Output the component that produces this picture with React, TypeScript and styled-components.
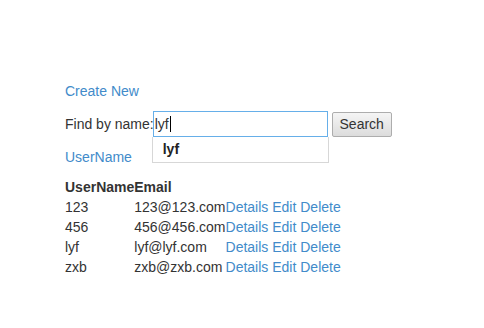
import React from "react";
import styled, { createGlobalStyle } from "styled-components";

const Global = createGlobalStyle`
  html, body { margin: 0; padding: 0; background: #fff; }
  body {
    font-family: "Liberation Sans", Arial, Helvetica, sans-serif;
    font-size: 14px;
    line-height: 20px;
    color: #333;
  }
`;

const Page = styled.div`
  padding: 81px 0 0 65px;
`;

const Link = styled.a`
  color: #428bca;
  text-decoration: none;
  cursor: pointer;
`;

const Para = styled.p<{ $gap: number }>`
  margin: 0 0 ${(p) => p.$gap}px 0;
  height: 20px;
`;

const FormRow = styled.form`
  display: flex;
  align-items: center;
  height: 26px;
  margin: 0 0 10px 0;
`;

const Label = styled.label`
  white-space: nowrap;
`;

const FieldWrap = styled.div`
  position: relative;
  margin-left: -1px;
`;

const Field = styled.div`
  box-sizing: border-box;
  width: 175px;
  height: 26px;
  border: 1px solid #66afe9;
  padding: 0 1px;
  display: flex;
  align-items: center;
  color: #333;
  background: #fff;
`;

const Caret = styled.span`
  display: inline-block;
  width: 1px;
  height: 16px;
  background: #000;
  margin-left: 1px;
`;

const Menu = styled.ul`
  position: absolute;
  top: 100%;
  left: -1px;
  box-sizing: border-box;
  width: 177px;
  height: 26px;
  margin: 0;
  padding: 0;
  list-style: none;
  border: 1px solid #d7d7d7;
  border-top: none;
  background: #fff;
`;

const MenuItem = styled.li`
  padding: 2px 0 0 10px;
  font-weight: bold;
  color: #222;
`;

const Button = styled.button`
  box-sizing: border-box;
  margin-left: 4px;
  width: 60px;
  height: 25px;
  padding: 0;
  font-family: inherit;
  font-size: 14px;
  color: #333;
  border: 1px solid #adadad;
  border-radius: 2px;
  background: linear-gradient(#f5f5f5, #dcdcdc);
`;

const Table = styled.table`
  border-collapse: collapse;
  border-spacing: 0;
  margin-top: 10px;
`;

const Th = styled.th`
  padding: 0;
  text-align: left;
  font-weight: bold;
  height: 20px;
  color: #333;
`;

const Td = styled.td`
  padding: 0;
  height: 20px;
  white-space: nowrap;
`;

const users = [
  { name: "123", email: "123@123.com" },
  { name: "456", email: "456@456.com" },
  { name: "lyf", email: "lyf@lyf.com" },
  { name: "zxb", email: "zxb@zxb.com" },
];

export default function App() {
  return (
    <>
      <Global />
      <Page>
        <Para $gap={10}>
          <Link>Create New</Link>
        </Para>
        <FormRow onSubmit={(e) => e.preventDefault()}>
          <Label>Find by name:</Label>
          <FieldWrap>
            <Field>
              lyf
              <Caret />
            </Field>
            <Menu>
              <MenuItem>lyf</MenuItem>
            </Menu>
          </FieldWrap>
          <Button type="submit">Search</Button>
        </FormRow>
        <Para $gap={0}>
          <Link>UserName</Link>
        </Para>
        <Table>
          <thead>
            <tr>
              <Th>UserName</Th>
              <Th>Email</Th>
              <Th></Th>
            </tr>
          </thead>
          <tbody>
            {users.map((u) => (
              <tr key={u.name}>
                <Td>{u.name}</Td>
                <Td>{u.email}</Td>
                <Td>
                  <Link>Details</Link> <Link>Edit</Link> <Link>Delete</Link>
                </Td>
              </tr>
            ))}
          </tbody>
        </Table>
      </Page>
    </>
  );
}
